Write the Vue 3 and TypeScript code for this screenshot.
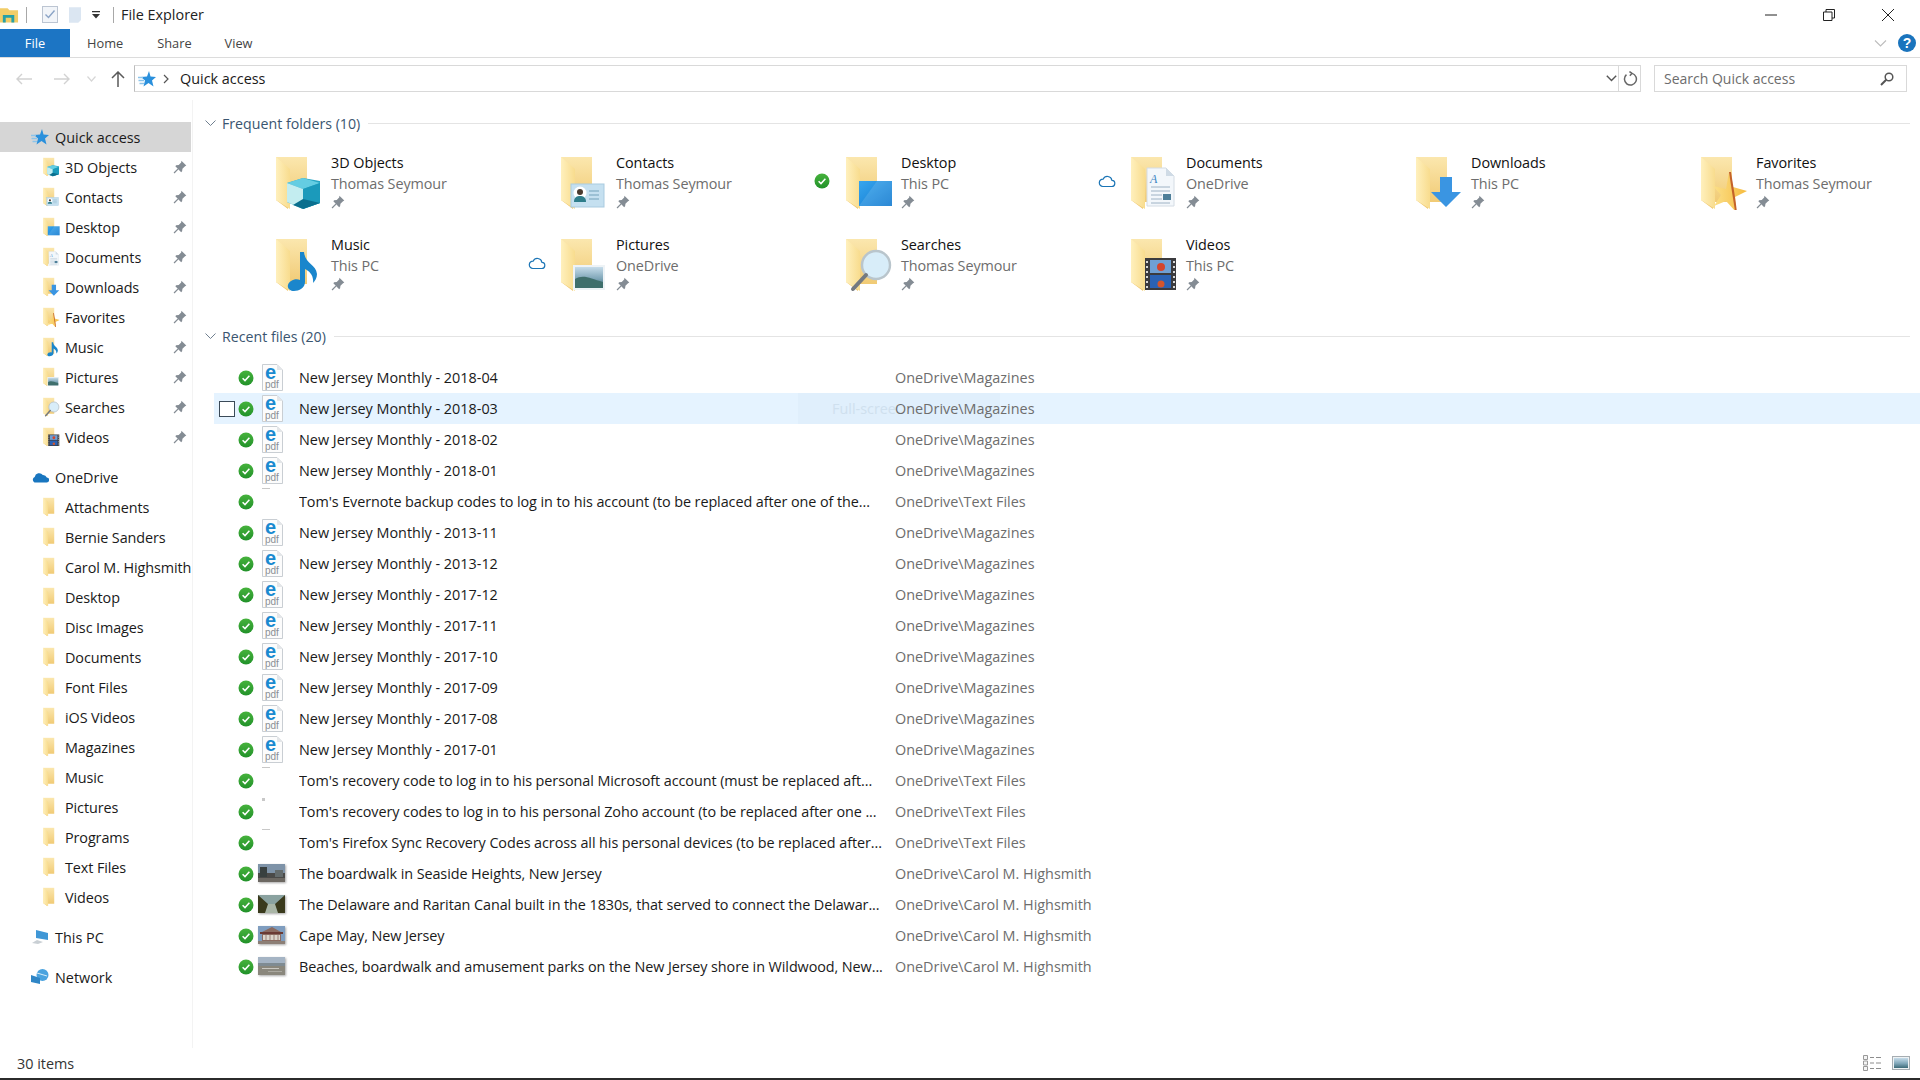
<script setup lang="ts">
interface Tile { name: string; sub: string; icon: string; status?: 'ok' | 'cloud' }
interface Nav { name: string; icon: string; pin?: boolean }
interface FileRow { name: string; path: string; kind: 'pdf' | 'txt' | 'photo'; thumb?: string; mark?: string }

const tiles: Tile[] = [
  { name: '3D Objects', sub: 'Thomas Seymour', icon: 'i-3d' },
  { name: 'Contacts', sub: 'Thomas Seymour', icon: 'i-contacts' },
  { name: 'Desktop', sub: 'This PC', icon: 'i-desktop', status: 'ok' },
  { name: 'Documents', sub: 'OneDrive', icon: 'i-docs', status: 'cloud' },
  { name: 'Downloads', sub: 'This PC', icon: 'i-downloads' },
  { name: 'Favorites', sub: 'Thomas Seymour', icon: 'i-favorites' },
  { name: 'Music', sub: 'This PC', icon: 'i-music' },
  { name: 'Pictures', sub: 'OneDrive', icon: 'i-pictures', status: 'cloud' },
  { name: 'Searches', sub: 'Thomas Seymour', icon: 'i-searches' },
  { name: 'Videos', sub: 'This PC', icon: 'i-videos' },
]

const quick: Nav[] = tiles.map((t) => ({ name: t.name, icon: t.icon, pin: true }))
const drive: string[] = ['Attachments', 'Bernie Sanders', 'Carol M. Highsmith', 'Desktop', 'Disc Images', 'Documents', 'Font Files', 'iOS Videos', 'Magazines', 'Music', 'Pictures', 'Programs', 'Text Files', 'Videos']

const mag = 'OneDrive\\Magazines'
const txt = 'OneDrive\\Text Files'
const carol = 'OneDrive\\Carol M. Highsmith'
const files: FileRow[] = [
  ...['2018-04', '2018-03', '2018-02', '2018-01'].map((d): FileRow => ({ name: `New Jersey Monthly - ${d}`, path: mag, kind: 'pdf' })),
  { name: "Tom's Evernote backup codes to log in to his account (to be replaced after one of the...", path: txt, kind: 'txt', mark: 'wide' },
  ...['2013-11', '2013-12', '2017-12', '2017-11', '2017-10', '2017-09', '2017-08', '2017-01'].map((d): FileRow => ({ name: `New Jersey Monthly - ${d}`, path: mag, kind: 'pdf' })),
  { name: "Tom's recovery code to log in to his personal Microsoft account (must be replaced aft...", path: txt, kind: 'txt', mark: 'wide' },
  { name: "Tom's recovery codes to log in to his personal Zoho account (to be replaced after one ...", path: txt, kind: 'txt', mark: 'dot' },
  { name: "Tom's Firefox Sync Recovery Codes across all his personal devices (to be replaced after...", path: txt, kind: 'txt', mark: 'wide' },
  { name: 'The boardwalk in Seaside Heights, New Jersey', path: carol, kind: 'photo', thumb: 'p-seaside' },
  { name: 'The Delaware and Raritan Canal built in the 1830s, that served to connect the Delawar...', path: carol, kind: 'photo', thumb: 'p-canal' },
  { name: 'Cape May, New Jersey', path: carol, kind: 'photo', thumb: 'p-cape' },
  { name: 'Beaches, boardwalk and amusement parks on the New Jersey shore in Wildwood, New...', path: carol, kind: 'photo', thumb: 'p-beach' },
]
</script>

<template>
  <div class="app">
    <svg class="defs" aria-hidden="true">
      <defs>
        <linearGradient id="g-back" x1="0" y1="0" x2="0" y2="1"><stop offset="0" stop-color="#fbe7ae" /><stop offset="1" stop-color="#efc66c" /></linearGradient>
        <linearGradient id="g-flap" x1="0" y1="0" x2="1" y2="0"><stop offset="0" stop-color="#fff0bd" /><stop offset="1" stop-color="#f8dc8e" /></linearGradient>
        <linearGradient id="g-ok" x1="0" y1="0" x2="0" y2="1"><stop offset="0" stop-color="#46b23c" /><stop offset="1" stop-color="#22922a" /></linearGradient>
        <linearGradient id="g-sea" x1="0" y1="0" x2="0" y2="1"><stop offset="0" stop-color="#c6dcea" /><stop offset=".55" stop-color="#7fa6b8" /><stop offset="1" stop-color="#3d6a78" /></linearGradient>
        <linearGradient id="g-blue" x1="0" y1="0" x2="1" y2="1"><stop offset="0" stop-color="#38a6ee" /><stop offset="1" stop-color="#0f78cf" /></linearGradient>
        <linearGradient id="g-star" x1="0" y1="0" x2="1" y2="0"><stop offset="0" stop-color="#fbe08a" /><stop offset="1" stop-color="#f6bb3e" /></linearGradient>
        <symbol id="folder" viewBox="0 0 50 54">
          <path d="M3 1H34V46H15V53L3 44Z" fill="url(#g-back)" />
          <path d="M3 1L17 13V53L3 44Z" fill="url(#g-flap)" />
        </symbol>
        <symbol id="i-plain" viewBox="0 0 50 54"><use href="#folder" width="50" height="54" /></symbol>
        <symbol id="i-3d" viewBox="0 0 50 54">
          <use href="#folder" width="50" height="54" />
          <path d="M30 22L47 25V47L30 53L14 46V27Z" fill="#29a6c4" />
          <path d="M14 27L30 22L47 27L30 33Z" fill="#64cde2" />
          <path d="M14 27L30 33V53L14 46Z" fill="#c3edf0" />
          <path d="M30 33L47 27V47L30 53Z" fill="#1b9abb" />
          <path d="M30 43L47 47L30 53L20 49Z" fill="#0b6f8e" />
        </symbol>
        <symbol id="i-contacts" viewBox="0 0 50 54">
          <use href="#folder" width="50" height="54" />
          <rect x="13" y="28" width="33" height="23" fill="#c5e0f0" stroke="#a9cbe0" />
          <circle cx="22" cy="37" r="6.5" fill="#fff" />
          <circle cx="22" cy="36" r="3" fill="#4a3b30" />
          <path d="M16 46c0-5 3-6 6-6s6 1 6 6z" fill="#2e7d8a" />
          <path d="M31 35h10M31 39h10M31 43h10" stroke="#8fb6cc" stroke-width="1.3" />
        </symbol>
        <symbol id="i-desktop" viewBox="0 0 50 54">
          <use href="#folder" width="50" height="54" />
          <rect x="16" y="25" width="33" height="25" fill="url(#g-blue)" />
          <path d="M16 50L34 25H49V50Z" fill="#fff" opacity=".12" />
        </symbol>
        <symbol id="i-docs" viewBox="0 0 50 54">
          <use href="#folder" width="50" height="54" />
          <path d="M19 12H38L46 20V50H19Z" fill="#f3f7fb" stroke="#d4dce4" />
          <path d="M38 12V20H46Z" fill="#cfdbe6" />
          <text x="22" y="27" font-size="12" font-style="italic" fill="#3f86c4" font-family="Liberation Serif, serif">A</text>
          <path d="M23 31H42M23 35H42M23 39H34M23 43H34M23 47H42" stroke="#9eb2c4" stroke-width="1" />
          <rect x="35" y="38" width="8" height="6" fill="#4e7f99" />
        </symbol>
        <symbol id="i-downloads" viewBox="0 0 50 54">
          <use href="#folder" width="50" height="54" />
          <path d="M27 21H39V36H48L33 51L18 36H27Z" fill="#3a95e2" />
        </symbol>
        <symbol id="i-favorites" viewBox="0 0 50 54">
          <use href="#folder" width="50" height="54" />
          <path d="M31 16L35 31L49 35L37 41L38 56L28 45L16 50L23 39L15 30L28 33Z" fill="url(#g-star)" />
          <path d="M31 16L33 16L37 41L39 56L37 55L34 36Z" fill="#c4622a" />
        </symbol>
        <symbol id="i-music" viewBox="0 0 50 54">
          <use href="#folder" width="50" height="54" />
          <path d="M27 14H31C32 26 43 26 44 36C44 40 42 43 40 45C41 37 36 33 32 31V44C32 50 26 53 21 53C17 53 14 50 15 47C16 43 22 40 27 42Z" fill="#1a86cc" />
        </symbol>
        <symbol id="i-pictures" viewBox="0 0 50 54">
          <use href="#folder" width="50" height="54" />
          <rect x="15" y="27" width="32" height="25" fill="#eef3f6" />
          <rect x="17" y="29" width="28" height="21" fill="url(#g-sea)" />
          <path d="M17 41C25 36 32 40 45 44V50H17Z" fill="#3f6f6c" />
        </symbol>
        <symbol id="i-searches" viewBox="0 0 50 54">
          <use href="#folder" width="50" height="54" />
          <circle cx="33" cy="27" r="14" fill="#d8edf9" stroke="#b9c5cc" stroke-width="2.4" />
          <path d="M23 37L10 51" stroke="#737980" stroke-width="4" stroke-linecap="round" />
        </symbol>
        <symbol id="i-videos" viewBox="0 0 50 54">
          <use href="#folder" width="50" height="54" />
          <rect x="17" y="20" width="31" height="32" fill="#3b3b3e" />
          <rect x="22" y="22" width="21" height="13" fill="#6fa0d4" />
          <rect x="22" y="37" width="21" height="13" fill="#2a62b4" />
          <circle cx="33" cy="29" r="4" fill="#d4452c" />
          <circle cx="33" cy="46" r="3.5" fill="#d4552c" />
          <path d="M19 23v2M19 28v2M19 33v2M19 38v2M19 43v2M19 48v2M46 23v2M46 28v2M46 33v2M46 38v2M46 43v2M46 48v2" stroke="#d8d8d8" stroke-width="2" />
        </symbol>
        <symbol id="star" viewBox="0 0 18 18">
          <path d="M11 1L12.500 6.500L18 7L14 10.500L15.500 16.500L10.500 13L5.500 16.500L7 10.500L3 7L9 6.500Z" fill="#2a90dc" />
          <path d="M0 7.500H5M0.500 10.500H6M1.500 13.500H6" stroke="#8cc4ea" stroke-width="1.3" />
        </symbol>
        <symbol id="pin" viewBox="0 0 12 12">
          <path d="M7.2.6l4.2 4.2-1.1.6-2.2 2.1-.3 2.2-.8.7L2 5.4l.7-.8 2.2-.3L7 2.1z" fill="#848c94" />
          <path d="M4.4 7.6L.9 11.1" stroke="#848c94" stroke-width="1.1" />
        </symbol>
        <symbol id="ok" viewBox="0 0 16 16">
          <circle cx="8" cy="8" r="7.5" fill="url(#g-ok)" />
          <path d="M4.6 8.2l2.4 2.4 4.4-4.8" fill="none" stroke="#fff" stroke-width="1.5" />
        </symbol>
        <symbol id="cloud" viewBox="0 0 18 14">
          <path d="M4.8 12.5h8.7a3.1 3.1 0 0 0 .4-6.2 4.6 4.6 0 0 0-8.7-1.2 3.7 3.7 0 0 0-.4 7.4z" fill="none" stroke="#1a74b5" stroke-width="1.2" />
        </symbol>
        <symbol id="pdf" viewBox="0 0 21 27">
          <path d="M.5.5H15L20.5 6V26.5H.5Z" fill="#fcfcfc" stroke="#c9ced3" />
          <path d="M15 .5V6H20.5Z" fill="#e3e6e9" />
          <text x="3" y="15" font-size="20" font-weight="700" fill="#1a8ad0" font-family="Liberation Sans, sans-serif">e</text>
          <text x="3" y="24" font-size="10" fill="#8a8f94" font-family="Liberation Sans, sans-serif">pdf</text>
        </symbol>
        <symbol id="p-seaside" viewBox="0 0 27 18">
          <rect width="27" height="18" fill="#7e93a8" />
          <rect y="9" width="27" height="9" fill="#4a4a48" />
          <rect x="2" y="3" width="7" height="10" fill="#38403f" />
          <rect x="17" y="6" width="8" height="7" fill="#636b6c" />
          <rect y="14" width="27" height="4" fill="#6c6862" />
        </symbol>
        <symbol id="p-canal" viewBox="0 0 27 18">
          <rect width="27" height="18" fill="#8aa2a0" />
          <path d="M0 0L10 9H17L27 0V18H0Z" fill="#3a3a1c" />
          <path d="M10 9H17L20 18H7Z" fill="#a9b5a6" />
        </symbol>
        <symbol id="p-cape" viewBox="0 0 27 18">
          <rect width="27" height="18" fill="#7f9dbf" />
          <path d="M4 6L14 1L23 6V15H4Z" fill="#8a6a60" />
          <path d="M2 6H25V8H2Z" fill="#6a3a34" />
          <path d="M5 9H22V14H5Z" fill="#dcd6cc" />
          <path d="M8 9V14M12 9V14M16 9V14M20 9V14" stroke="#9a8078" />
          <rect y="15" width="27" height="3" fill="#8c7f76" />
        </symbol>
        <symbol id="p-beach" viewBox="0 0 27 18">
          <rect width="27" height="18" fill="#a5b4c4" />
          <rect y="6" width="27" height="3" fill="#7f8b92" />
          <rect y="9" width="27" height="9" fill="#8a877c" />
          <rect x="4" y="11" width="17" height="1" fill="#c8c6c0" />
          <rect x="10" y="14" width="14" height="1" fill="#aaa89f" />
        </symbol>
      </defs>
    </svg>

    <header class="titlebar">
      <svg class="app-icon" viewBox="0 0 20 18">
        <path d="M0 2H8L10 4H19V17H0Z" fill="#f2cd68" />
        <path d="M3 17V9H15V17H12V12H6V17Z" fill="#26a0a8" />
      </svg>
      <i class="vsep first"></i>
      <svg class="qa-check" viewBox="0 0 16 17">
        <rect x=".5" y=".5" width="15" height="16" fill="#f2f5f9" stroke="#bcc5d2" />
        <path d="M3.5 8.5l3 3 6-7" fill="none" stroke="#8ba4c6" stroke-width="1.4" />
      </svg>
      <svg class="qa-page" viewBox="0 0 13 17"><path d="M0 0H13V14L10 17H0Z" fill="#dbe6f2" /></svg>
      <svg class="qa-drop" viewBox="0 0 8 8"><path d="M0 0H8V1.2H0ZM0 3H8L4 7.5Z" fill="#333" /></svg>
      <i class="vsep second"></i>
      <span class="title">File Explorer</span>
      <div class="win">
        <svg class="win-btn" viewBox="0 0 12 12"><path d="M0 6H12" stroke="#222" stroke-width="1" /></svg>
        <svg class="win-btn" viewBox="0 0 12 12"><path d="M.5 3H9V11.5H.5ZM3 3V.5H11.5V9H9" fill="none" stroke="#222" /></svg>
        <svg class="win-btn" viewBox="0 0 12 12"><path d="M0 0L12 12M12 0L0 12" stroke="#222" stroke-width="1" /></svg>
      </div>
    </header>

    <nav class="tabs">
      <span class="tab file">File</span>
      <span class="tab home">Home</span>
      <span class="tab share">Share</span>
      <span class="tab view">View</span>
      <svg class="collapse" viewBox="0 0 12 7"><path d="M.5.5L6 6 11.5.5" fill="none" stroke="#bdbdbd" stroke-width="1.1" /></svg>
      <svg class="help" viewBox="0 0 18 18">
        <circle cx="9" cy="9" r="9" fill="#1a74bd" />
        <text x="9" y="14" font-size="14" font-weight="700" text-anchor="middle" fill="#fff" font-family="Liberation Sans, sans-serif">?</text>
      </svg>
    </nav>

    <div class="addr-row">
      <svg class="nav-arrow back" viewBox="0 0 16 12"><path d="M6 1L1 6l5 5M1 6H16" fill="none" stroke="#d2d2d2" stroke-width="1.4" /></svg>
      <svg class="nav-arrow fwd" viewBox="0 0 16 12"><path d="M10 1l5 5-5 5M15 6H0" fill="none" stroke="#d2d2d2" stroke-width="1.4" /></svg>
      <svg class="nav-drop" viewBox="0 0 9 6"><path d="M.5.5L4.5 5 8.5.5" fill="none" stroke="#d6d6d6" stroke-width="1.2" /></svg>
      <svg class="nav-up" viewBox="0 0 14 16"><path d="M1 7l6-6 6 6M7 1V16" fill="none" stroke="#5a5a5a" stroke-width="1.5" /></svg>
      <div class="addr">
        <svg class="addr-star"><use href="#star" /></svg>
        <svg class="crumb" viewBox="0 0 6 10"><path d="M1 1l4 4-4 4" fill="none" stroke="#555" stroke-width="1.2" /></svg>
        <span class="addr-text">Quick access</span>
        <svg class="addr-drop" viewBox="0 0 11 7"><path d="M.8.8L5.5 5.5 10.2.8" fill="none" stroke="#555" stroke-width="1.4" /></svg>
        <div class="refresh">
          <svg viewBox="0 0 14 15"><path d="M8.5 2.2A5.6 5.6 0 1 1 3.2 3.4M8.5 2.2L6 .5M8.5 2.2L6.4 4.5" fill="none" stroke="#666" stroke-width="1.4" /></svg>
        </div>
      </div>
      <div class="search">
        <span>Search Quick access</span>
        <svg viewBox="0 0 14 14"><circle cx="9" cy="5" r="3.8" fill="none" stroke="#555" stroke-width="1.5" /><path d="M6.2 7.8L1 13" stroke="#555" stroke-width="2" /></svg>
      </div>
    </div>

    <div class="body">
      <aside class="side">
        <div class="nav-item top selected">
          <svg class="top-icon"><use href="#star" /></svg>
          <span>Quick access</span>
        </div>
        <div v-for="q in quick" :key="q.name" class="nav-item child">
          <svg class="child-icon"><use :href="`#${q.icon}`" /></svg>
          <span class="nav-name">{{ q.name }}</span>
          <svg class="nav-pin"><use href="#pin" /></svg>
        </div>

        <div class="nav-item top group">
          <svg class="top-icon" viewBox="0 0 18 12"><path d="M3.5 11.5h12a2.5 2.5 0 0 0 .3-5 4 4 0 0 0-4-2.6A4.6 4.6 0 0 0 3.7 6 3 3 0 0 0 3.500 11.500z" fill="#1976bf" /></svg>
          <span>OneDrive</span>
        </div>
        <div v-for="d in drive" :key="d" class="nav-item child">
          <svg class="child-icon"><use href="#i-plain" /></svg>
          <span class="nav-name">{{ d }}</span>
        </div>

        <div class="nav-item top group">
          <svg class="top-icon" viewBox="0 0 18 16"><path d="M5 1L17 4V11L5 9Z" fill="#3f97d6" /><path d="M1 14L6 11L12 13L7 15Z" fill="#c9cfd4" /></svg>
          <span>This PC</span>
        </div>
        <div class="nav-item top group">
          <svg class="top-icon" viewBox="0 0 18 16"><circle cx="11.500" cy="6" r="6" fill="#4aa3df" /><path d="M0 6L9 9V15L0 13Z" fill="#2f86c6" /><path d="M6 4L16 7" stroke="#d8eefa" /></svg>
          <span>Network</span>
        </div>
      </aside>

      <main class="main">
        <div class="group-head">
          <svg class="chev" viewBox="0 0 11 7"><path d="M.5.5L5.500 5.500 10.500.5" fill="none" stroke="#6f7f8f" /></svg>
          <span>Frequent folders (10)</span>
          <i class="rule"></i>
        </div>
        <div class="tiles">
          <div v-for="t in tiles" :key="t.name" class="tile">
            <span class="tile-status">
              <svg v-if="t.status === 'ok'" class="st-ok"><use href="#ok" /></svg>
              <svg v-else-if="t.status === 'cloud'" class="st-cloud"><use href="#cloud" /></svg>
            </span>
            <svg class="tile-icon"><use :href="`#${t.icon}`" /></svg>
            <div class="tile-text">
              <div class="tile-name">{{ t.name }}</div>
              <div class="tile-sub">{{ t.sub }}</div>
              <svg class="tile-pin"><use href="#pin" /></svg>
            </div>
          </div>
        </div>

        <div class="group-head recent">
          <svg class="chev" viewBox="0 0 11 7"><path d="M.5.5L5.500 5.500 10.500.5" fill="none" stroke="#6f7f8f" /></svg>
          <span>Recent files (20)</span>
          <i class="rule"></i>
        </div>
        <div class="rows">
          <div v-for="(f, i) in files" :key="f.name" class="row" :class="{ hover: i === 1 }">
            <span class="check"></span>
            <svg class="st-ok row-ok"><use href="#ok" /></svg>
            <span class="thumb-slot">
              <svg v-if="f.kind === 'pdf'" class="pdf"><use href="#pdf" /></svg>
              <svg v-else-if="f.kind === 'photo'" class="photo"><use :href="`#${f.thumb}`" /></svg>
              <i v-else class="mark" :class="f.mark"></i>
            </span>
            <span class="row-name" :class="{ tight: f.kind !== 'pdf' }">{{ f.name }}</span>
            <span class="row-path">{{ f.path }}</span>
            <span v-if="i === 1" class="ghost">Full-scree</span>
          </div>
        </div>
      </main>
    </div>

    <footer class="status">
      <span>30 items</span>
      <div class="views">
        <svg class="view-details" viewBox="0 0 19 16">
          <path d="M.5.5h4v4h-4zM.5 6h4v4h-4zM.5 11.500h4v4h-4z" fill="#f4f4f4" stroke="#999" />
          <path d="M7 2.500h4M13 2.500h5M7 8h4M13 8h5M7 13.500h4M13 13.500h5" stroke="#8d8d8d" />
        </svg>
        <svg class="view-large" viewBox="0 0 18 14">
          <rect x=".5" y=".5" width="17" height="13" fill="#eef2f4" stroke="#a6adb2" />
          <rect x="2" y="2" width="14" height="10" fill="url(#g-sea)" />
        </svg>
      </div>
    </footer>
    <div class="strip"></div>
  </div>
</template>

<style>
html, body { margin: 0; background: #fff; }
</style>

<style scoped>
.app {
  width: 1920px;
  height: 1080px;
  overflow: hidden;
  display: flex;
  flex-direction: column;
  background: #fff;
  color: #1a1a1a;
  font-family: "Open Sans", "Noto Sans", sans-serif;
  font-size: 14.4px;
}
.defs { display: block; width: 0; height: 0; }
svg { display: block; flex: none; }

.titlebar { height: 29px; display: flex; align-items: center; flex: none; }
.app-icon { width: 19px; height: 18px; margin-left: 0; }
.vsep { display: block; width: 1px; height: 16px; background: #a8a8a8; }
.vsep.first { margin-left: 7px; }
.qa-check { width: 16px; height: 17px; margin-left: 15px; }
.qa-page { width: 12px; height: 16px; margin-left: 11px; }
.qa-drop { width: 8px; height: 8px; margin-left: 11px; }
.vsep.second { margin-left: 13px; }
.title { margin-left: 7px; font-size: 14.4px; color: #222; }
.win { margin-left: auto; display: flex; gap: 46px; padding-right: 26px; }
.win-btn { width: 12px; height: 12px; }
.win-btn:nth-child(2) { margin-left: -1px; margin-right: 1px; }
.win-btn:nth-child(1) { margin-left: -1px; margin-right: 1px; }

.tabs {
  height: 28px;
  flex: none;
  display: flex;
  align-items: center;
  border-bottom: 1px solid #dcdcdc;
  font-size: 12.8px;
  color: #444;
}
.tab.file {
  width: 70px;
  height: 28px;
  line-height: 28px;
  text-align: center;
  background: #1c75c4;
  color: #fff;
}
.tab.home { margin-left: 17px; }
.tab.share { margin-left: 34px; }
.tab.view { margin-left: 33px; }
.collapse { width: 13px; height: 7px; margin-left: auto; }
.help { width: 18px; height: 18px; margin-left: 11px; margin-right: 4px; }

.addr-row { height: 42px; flex: none; display: flex; align-items: center; position: relative; }
.nav-arrow { width: 16px; height: 12px; }
.back { margin-left: 16px; }
.fwd { margin-left: 22px; }
.nav-drop { width: 9px; height: 6px; margin-left: 17px; }
.nav-up { width: 14px; height: 16px; margin-left: 15px; }
.addr {
  width: 1507px;
  height: 27px;
  box-sizing: border-box;
  margin-left: 9px;
  margin-top: -1px;
  border: 1px solid #d9d9d9;
  border-left-color: #bdbdbd;
  display: flex;
  align-items: center;
}
.addr-star { width: 18px; height: 18px; margin-left: 3px; }
.crumb { width: 6px; height: 10px; margin-left: 7px; }
.addr-text { margin-left: 11px; font-size: 14.4px; }
.addr-drop { width: 11px; height: 7px; margin-left: auto; margin-right: 1px; }
.refresh {
  width: 21px;
  height: 25px;
  border-left: 1px solid #d9d9d9;
  display: flex;
  align-items: center;
  justify-content: center;
}
.refresh svg { width: 15px; height: 16px; margin-left: 2px; }
.search {
  width: 253px;
  height: 27px;
  box-sizing: border-box;
  margin-left: 13px;
  margin-top: -1px;
  border: 1px solid #d9d9d9;
  padding: 0 12px 0 9px;
  display: flex;
  align-items: center;
  justify-content: space-between;
  color: #6d6d6d;
  font-size: 14px;
}
.search svg { width: 14px; height: 14px; }

.body { flex: 1; min-height: 0; display: flex; }
.side {
  width: 193px;
  flex: none;
  box-sizing: border-box;
  padding-top: 22px;
  border-right: 1px solid #f3f3f3;
  overflow: hidden;
}
.nav-item { height: 30px; width: 191px; display: flex; align-items: center; white-space: nowrap; color: #1a1a1a; }
.nav-item.selected { background: #d6d6d6; }
.nav-item.group { margin-top: 10px; }
.top-icon { width: 18px; height: 18px; margin-left: 31px; margin-right: 6px; }
.child-icon { width: 18px; height: 20px; margin-left: 42px; margin-right: 5px; }
.nav-name { flex: 1; letter-spacing: -0.1px; }
.nav-pin { width: 14px; height: 14px; margin-right: 4px; }

.main { flex: 1; min-width: 0; padding-top: 13px; overflow: hidden; }
.group-head {
  height: 20px;
  display: flex;
  align-items: center;
  padding-left: 12px;
  color: #3a5570;
  font-size: 14.2px;
}
.group-head.recent { margin-top: 10px; }
.chev { width: 11px; height: 7px; margin-right: 6px; }
.rule { flex: 1; height: 1px; background: #e4e4e4; margin-left: 8px; margin-right: 10px; }

.tiles {
  margin-top: 19px;
  padding-left: 51px;
  display: grid;
  grid-template-columns: repeat(5, 285px) 1fr;
  grid-auto-rows: 82px;
}
.tile { display: flex; align-items: flex-start; }
.tile-status { width: 16px; height: 16px; margin-top: 21px; display: flex; justify-content: center; align-items: center; }
.st-ok { width: 16px; height: 16px; }
.st-cloud { width: 18px; height: 14px; flex: none; }
.tile-icon { width: 50px; height: 54px; margin-left: 13px; margin-top: 4px; }
.tile-text { margin-left: 8px; }
.tile-name { height: 22px; line-height: 21px; color: #111; letter-spacing: -0.05px; }
.tile-sub { height: 19px; line-height: 19px; color: #6d6d6d; letter-spacing: -0.1px; }
.tile-pin { width: 14px; height: 14px; margin-top: 2px; }

.rows { margin-top: 16px; }
.row {
  height: 31px;
  margin-left: 21px;
  padding-left: 5px;
  display: flex;
  align-items: center;
  position: relative;
}
.row.hover { background: #e5f3ff; }
.check { width: 16px; height: 16px; box-sizing: border-box; flex: none; }
.row.hover .check { border: 1px solid #3b4a58; background: #fff; }
.row-ok { margin-left: 3px; }
.thumb-slot { width: 27px; height: 31px; margin-left: 4px; position: relative; flex: none; }
.pdf { position: absolute; left: 4px; top: 2px; width: 21px; height: 27px; }
.photo { position: absolute; left: 0; top: 6px; width: 27px; height: 18px; filter: drop-shadow(1px 1px 1px rgba(0, 0, 0, .35)); }
.mark { position: absolute; left: 4px; top: 2px; height: 1px; background: #c8c8c8; }
.mark.wide { width: 8px; }
.mark.dot { width: 3px; height: 3px; }
.row-name { width: 596px; margin-left: 14px; flex: none; white-space: nowrap; overflow: hidden; color: #1a1a1a; position: relative; z-index: 1; }
.row-name.tight { letter-spacing: -0.08px; }
.row-path { color: #6d6d6d; position: relative; z-index: 1; }
.ghost {
  position: absolute;
  left: 584px;
  top: 0;
  width: 202px;
  height: 31px;
  box-sizing: border-box;
  padding-left: 34px;
  line-height: 31px;
  background: #e0effc;
  color: #cfe0ee;
  overflow: hidden;
  white-space: nowrap;
}

.status { height: 30px; flex: none; display: flex; align-items: center; justify-content: space-between; padding-left: 17px; color: #333; }
.views { display: flex; align-items: center; gap: 10px; padding-right: 10px; }
.view-details { width: 19px; height: 16px; }
.view-large { width: 18px; height: 14px; }
.strip { height: 2px; flex: none; background: #2b2b2b; }
</style>
